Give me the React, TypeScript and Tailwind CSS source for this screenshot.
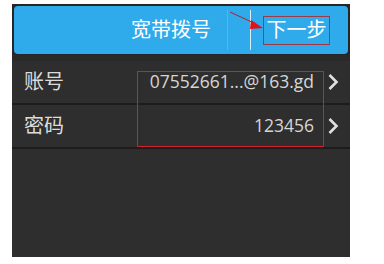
import React from "react";

const font = { fontFamily: '"Open Sans", "Noto Sans CJK SC", sans-serif' };

function Chevron() {
  return (
    <svg width="12" height="18" viewBox="0 0 12 18" className="shrink-0">
      <path d="M2.5 2 L9.5 9 L2.5 16" fill="none" stroke="#e0e0e0" strokeWidth="2.6" />
    </svg>
  );
}

function Row({ label, value }: { label: string; value: string }) {
  return (
    <div className="flex items-center h-[44px] pl-[12px] pr-[11px] border-b-2 border-[#1c1c1c]">
      <span className="text-[20px] text-[#dcdcdc] leading-none">{label}</span>
      <span className="ml-auto text-[17.5px] text-[#d6d6d6] leading-none mr-[13px]">{value}</span>
      <Chevron />
    </div>
  );
}

export default function App() {
  return (
    <div className="w-[384px] h-[264px] bg-white pt-[4px] pl-[12px]" style={font}>
      <div className="relative w-[338px] h-[253px] bg-[#2e2e2e]">
        <div className="bg-[#262626] p-[2px] pb-[1px]">
          <div className="relative h-[48px] rounded-[4px] bg-[#2fabec] flex items-center">
            <span className="ml-[117px] text-[20px] text-white leading-none">宽带拨号</span>
            <div className="ml-[16px] w-px h-[40px] bg-[#4fb9ef]" />
            <div className="ml-[22px] w-px h-[40px] bg-[#d8eefb]" />
            <div className="ml-[12px] h-[29px] w-[67px] border border-[#9c3a45] flex items-center justify-center">
              <span className="text-[20px] text-white leading-none">下一步</span>
            </div>
            <svg className="absolute left-[214px] top-[4px]" width="36" height="20" viewBox="0 0 36 20">
              <line x1="2" y1="2" x2="28" y2="14" stroke="#b0202c" strokeWidth="1" />
              <polygon points="23,10 35,18 22,19" fill="#e0101c" />
            </svg>
          </div>
        </div>
        <div className="h-[6px] bg-[#2a2a2a]" />
        <Row label="账号" value="07552661...@163.gd" />
        <Row label="密码" value="123456" />
        <div className="absolute z-10 left-[125px] top-[67px] w-[187px] h-[76px] outline outline-1 outline-[#d4202c] -outline-offset-1" />
      </div>
    </div>
  );
}
